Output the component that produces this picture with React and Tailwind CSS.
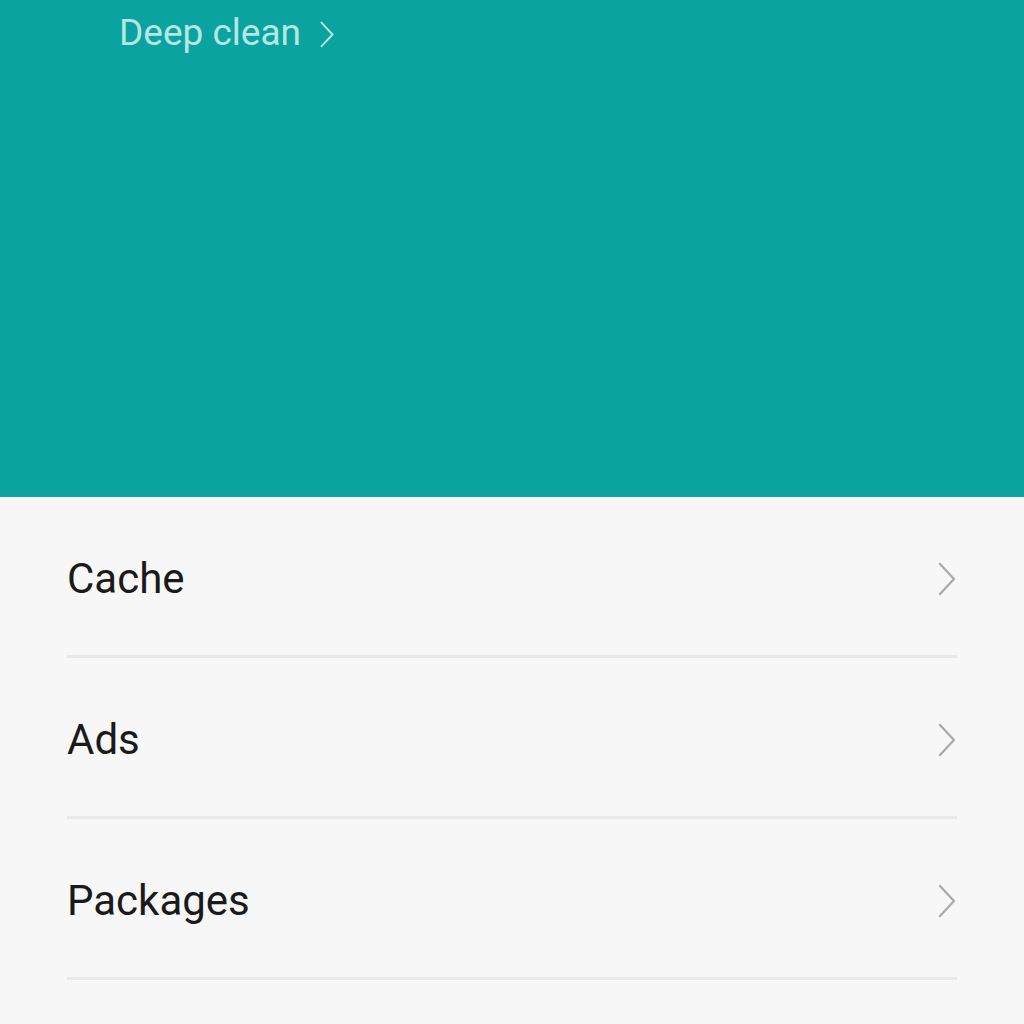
import React from 'react';

function Chevron({ className }) {
  return (
    <svg className={className} viewBox="0 0 20 34" fill="none">
      <path d="M3 2l14 15L3 32" stroke="currentColor" strokeWidth="2.4" strokeLinecap="round" strokeLinejoin="round" />
    </svg>
  );
}

const rows = ['Cache', 'Ads', 'Packages'];

export default function App() {
  return (
    <div className="w-[1024px] h-[1024px] overflow-hidden bg-[#f7f7f7] font-['Roboto',sans-serif]">
      {/* Header */}
      <div className="h-[497px] bg-[#0aa3a0]">
        <div className="flex items-center gap-[18px] pl-[119px] pt-[11px] text-[#b6e6e3]">
          <span className="text-[37px] leading-[44px]">Deep clean</span>
          <Chevron className="w-[16px] h-[27px] mt-[2px]" />
        </div>
      </div>

      {/* List */}
      <div className="px-[67px]">
        {rows.map((label) => (
          <div key={label} className="h-[161px] flex flex-col">
            <div className="flex-1 flex items-center justify-between pt-[5px]">
              <span className="text-[42px] text-[#1a1a1a]">{label}</span>
              <Chevron className="w-[20px] h-[34px] text-[#ababab]" />
            </div>
            <div className="h-[3px] bg-[#e8e8e8]" />
          </div>
        ))}
      </div>
    </div>
  );
}
